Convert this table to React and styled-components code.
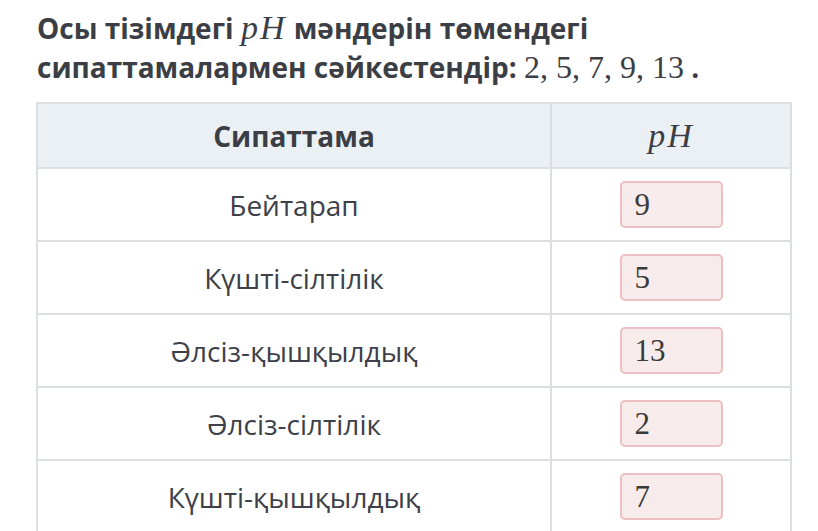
import React from "react";
import styled, { createGlobalStyle } from "styled-components";

const Global = createGlobalStyle`
  html, body { margin: 0; padding: 0; background: #fff; }
  body { font-family: "Open Sans", "Noto Sans", sans-serif; color: #3b3e45; }
`;

const Page = styled.div`
  width: 818px;
  height: 531px;
  overflow: hidden;
  padding: 8px 0 0 36px;
  box-sizing: border-box;
`;

const Title = styled.h1`
  margin: 0 0 15px 1px;
  font-size: 28px;
  line-height: 39px;
  font-weight: 700;
  color: #3b3e45;
  letter-spacing: 0;
`;

const MathText = styled.span`
  font-family: "Liberation Serif", "Times New Roman", serif;
  font-weight: 400;
  font-style: ${(p) => (p.$italic ? "italic" : "normal")};
  font-size: ${(p) => p.$size || "32px"};
  letter-spacing: ${(p) => (p.$italic ? "2px" : "0")};
`;

const Table = styled.table`
  border-collapse: collapse;
  width: 754px;
  table-layout: fixed;
`;

const Col = styled.col`
  width: ${(p) => p.$w};
`;

const HeadCell = styled.th`
  background: #ebf0f5;
  border: 2px solid #dcdfe2;
  height: 63px;
  padding: 0;
  font-size: 28px;
  font-weight: 700;
  color: #3b3e45;
  text-align: center;
`;

const Cell = styled.td`
  border: 2px solid #dcdfe2;
  height: 71px;
  padding: 0;
  font-size: 28px;
  font-weight: 400;
  color: #3d4048;
  text-align: center;
  vertical-align: middle;
`;

const AnswerBox = styled.div`
  width: 103px;
  height: 47px;
  box-sizing: border-box;
  margin: 0 auto;
  background: #f8ebec;
  border: 2px solid #ecbfc2;
  border-radius: 5px;
  display: flex;
  align-items: center;
  padding-left: 13px;
  font-family: "Liberation Serif", "Times New Roman", serif;
  font-size: 31px;
  color: #3a3a3a;
`;

const rows = [
  ["Бейтарап", "9"],
  ["Күшті-сілтілік", "5"],
  ["Әлсіз-қышқылдық", "13"],
  ["Әлсіз-сілтілік", "2"],
  ["Күшті-қышқылдық", "7"],
];

export default function App() {
  return (
    <Page>
      <Global />
      <Title>
        Осы тізімдегі <MathText $italic $size="34px">pH</MathText> мәндерін төмендегі
        <br />
        сипаттамалармен сәйкестендір: <MathText>2, 5, 7, 9, 13</MathText> .
      </Title>
      <Table>
        <colgroup>
          <Col $w="514px" />
          <Col $w="240px" />
        </colgroup>
        <thead>
          <tr>
            <HeadCell>Сипаттама</HeadCell>
            <HeadCell>
              <MathText $italic $size="34px">pH</MathText>
            </HeadCell>
          </tr>
        </thead>
        <tbody>
          {rows.map(([label, value]) => (
            <tr key={label}>
              <Cell>{label}</Cell>
              <Cell>
                <AnswerBox>{value}</AnswerBox>
              </Cell>
            </tr>
          ))}
        </tbody>
      </Table>
    </Page>
  );
}
